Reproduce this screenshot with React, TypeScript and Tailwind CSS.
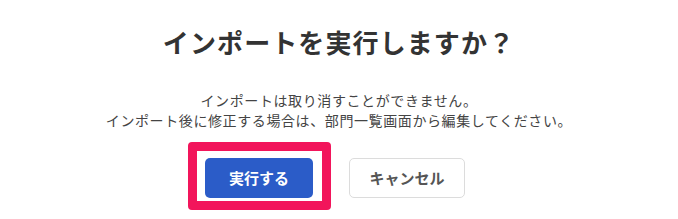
import React from "react";

export default function App() {
  return (
    <div
      className="w-[678px] h-[219px] bg-white flex flex-col items-center pt-[26px] text-[#333]"
      style={{ fontFamily: '"Noto Sans CJK JP", "Noto Sans", sans-serif' }}
    >
      {/* Title */}
      <h2 className="text-[26px] leading-[32px] font-bold text-[#333] tracking-[1.1px]">
        インポートを実行しますか？
      </h2>

      {/* Message */}
      <div className="mt-[32px] text-[14px] leading-[20px] text-[#444] text-center tracking-[0.6px]">
        <p>インポートは取り消すことができません。</p>
        <p>インポート後に修正する場合は、部門一覧画面から編集してください。</p>
      </div>

      {/* Actions */}
      <div className="mt-[28px] pr-[8px] flex items-center gap-[36px]">
        <div className="relative">
          <button className="w-[108px] h-[40px] rounded-[5px] bg-[#2b5cc8] text-white text-[15px] font-bold">
            実行する
          </button>
          {/* highlight annotation */}
          <span className="pointer-events-none absolute -left-[17px] -top-[16px] -right-[18px] -bottom-[12px] border-[9px] border-[#f2155b] rounded-[4px]" />
        </div>
        <button className="w-[116px] h-[40px] rounded-[5px] bg-white border border-[#dcdcdc] text-[#555] text-[15px] font-bold">
          キャンセル
        </button>
      </div>
    </div>
  );
}
